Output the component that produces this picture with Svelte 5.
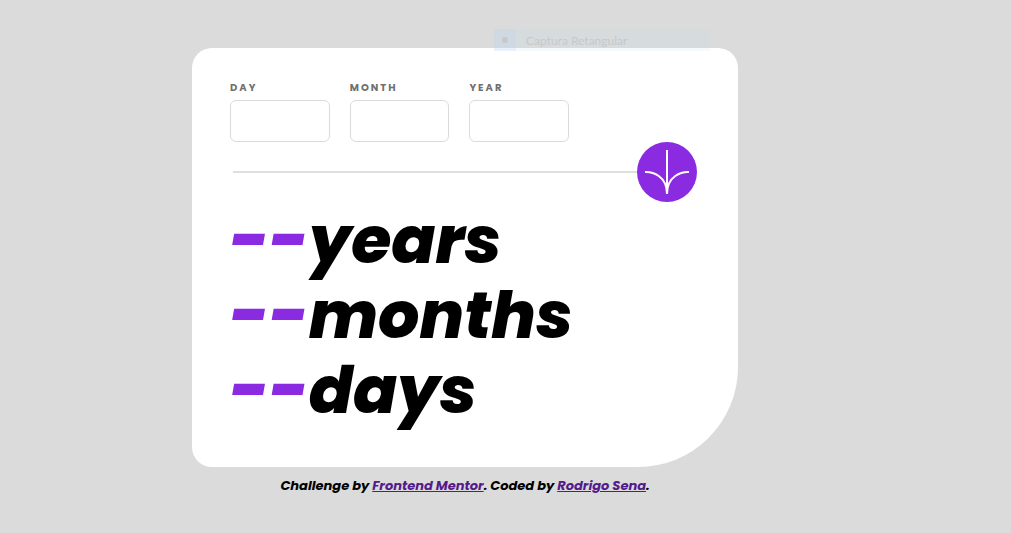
<script>
  const fields = [
    { id: 'day', label: 'DAY' },
    { id: 'month', label: 'MONTH' },
    { id: 'year', label: 'YEAR' }
  ];
  const results = ['years', 'months', 'days'];
  let values = $state({ day: '', month: '', year: '' });
</script>

<div class="page">
  <main class="card">
    <form onsubmit={(event) => event.preventDefault()}>
      <div class="fields">
        {#each fields as field}
          <div class="field">
            <label for={field.id}>{field.label}</label>
            <input id={field.id} type="text" inputmode="numeric" bind:value={values[field.id]} />
          </div>
        {/each}
      </div>
      <div class="divider">
        <span class="line"></span>
        <button type="submit" aria-label="Calculate age">
          <svg viewBox="0 0 46 44" width="46" height="44" fill="none" stroke="#fff" stroke-width="2">
            <path d="M1 22.019C8.333 21.686 23 25.616 23 44M23 44V0M45 22.019C37.667 21.686 23 25.616 23 44" />
          </svg>
        </button>
      </div>
    </form>
    <div class="results">
      {#each results as unit}
        <p><span class="value">--</span><span>{unit}</span></p>
      {/each}
    </div>
  </main>
  <footer>
    Challenge by <a href="#mentor">Frontend Mentor</a>. Coded by <a href="#author">Rodrigo Sena</a>.
  </footer>
  <div class="capture"><span class="marker"><i></i></span><span>Captura Retangular</span></div>
</div>

<style>
  :global(body) {
    margin: 0;
    background: #dbdbdb;
  }
  .page {
    position: relative;
    box-sizing: border-box;
    min-height: 100vh;
    padding: 48px 27% 0 19%;
    font-family: Poppins, Inter, sans-serif;
  }
  .card {
    box-sizing: border-box;
    padding: 32px 38px 40px;
    background: #fff;
    border-radius: 20px 20px 100px 20px;
  }
  .fields {
    display: flex;
    gap: 20px;
    padding-right: 131px;
  }
  .field {
    display: flex;
    flex-direction: column;
    gap: 4px;
    flex: 1;
    min-width: 0;
  }
  label {
    font-size: 10px;
    line-height: 16px;
    font-weight: 700;
    letter-spacing: 2px;
    color: #6f6f6f;
  }
  input {
    box-sizing: border-box;
    width: 100%;
    height: 42px;
    padding: 0 12px;
    border: 1px solid #dbdbdb;
    border-radius: 6px;
    background: #fff;
    font: 700 18px Poppins, Inter, sans-serif;
  }
  .divider {
    display: flex;
    align-items: center;
    padding: 0 3px;
  }
  .line {
    flex: 1;
    height: 2px;
    background: #dfdfdf;
  }
  button {
    display: grid;
    place-items: center;
    width: 60px;
    height: 60px;
    padding: 0;
    border: 0;
    border-radius: 50%;
    background: #8a2be2;
  }
  p {
    height: 75px;
    margin: 0;
    font-size: 65px;
    line-height: 75px;
    font-weight: 800;
    font-style: italic;
    white-space: nowrap;
  }
  .value {
    font-size: 68px;
    color: #8a2be2;
  }
  footer {
    padding-top: 9px;
    text-align: center;
    font-size: 13px;
    line-height: 20px;
    font-weight: 700;
    font-style: italic;
  }
  a {
    color: #551a8b;
  }
  .capture {
    position: absolute;
    top: 29px;
    left: 494px;
    display: flex;
    align-items: center;
    gap: 10px;
    width: 216px;
    height: 22px;
    background: rgb(190 225 245 / 16%);
    color: #c8c8c8;
    font: 12px Lato, sans-serif;
  }
  .marker {
    display: grid;
    place-items: center;
    width: 22px;
    height: 22px;
    background: rgb(180 210 255 / 20%);
  }
  .marker i {
    width: 6px;
    height: 6px;
    border-radius: 50%;
    background: #c8c8c8;
  }
</style>
